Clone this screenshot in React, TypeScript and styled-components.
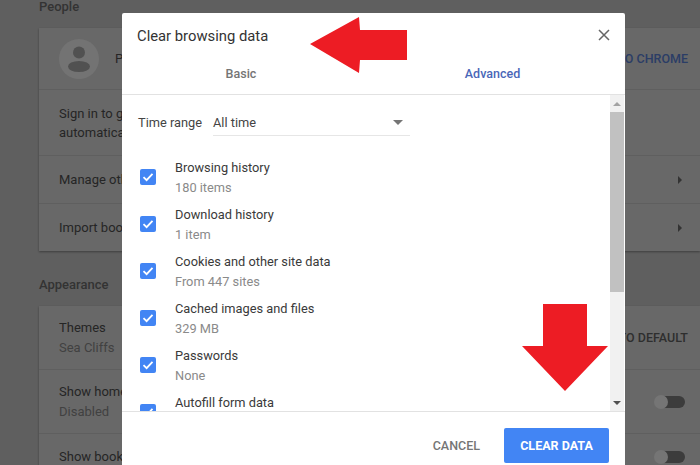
import styled, { createGlobalStyle } from 'styled-components'

const Global = createGlobalStyle`
  html, body {
    margin: 0;
    padding: 0;
    background: #5f5f5f;
    font-family: Roboto, "Liberation Sans", sans-serif;
    overflow: hidden;
  }
`

const Page = styled.div`
  position: relative;
  width: 700px;
  height: 465px;
  overflow: hidden;
  background: #5f5f5f;
`

const Settings = styled.div`
  padding-left: 39px;
  width: 661px;
  margin-top: -2px;
`

const SectionTitle = styled.div`
  font-size: 13px;
  font-weight: 500;
  line-height: 18px;
  color: #333;
  height: 18px;
  margin-bottom: 12px;
`

const Card = styled.div`
  background: #686868;
  box-shadow: 0 1px 2px rgba(0, 0, 0, 0.35);
  margin-bottom: 25px;
`

const SetRow = styled.div<{ $h: number }>`
  height: ${(p) => p.$h}px;
  box-sizing: border-box;
  padding: 0 18px 0 20px;
  display: flex;
  align-items: center;
  justify-content: space-between;
  border-top: 1px solid #5f5f5f;
  font-size: 13px;
  line-height: 19px;
  color: #252525;
  &:first-child {
    border-top: none;
  }
`

const SetLabel = styled.div`
  display: flex;
  align-items: center;
  gap: 16px;
`

const SetSub = styled.div`
  margin-top: 1px;
  color: #414141;
`

const Avatar = styled.div`
  width: 40px;
  height: 40px;
  border-radius: 50%;
  background: #737373;
  display: flex;
  align-items: center;
  justify-content: center;
`

const SetAction = styled.span<{ $blue?: boolean }>`
  font-size: 12.5px;
  font-weight: 500;
  margin-right: -6px;
  color: ${(p) => (p.$blue ? '#2b3d66' : '#2e2e2e')};
`

const Chevron = styled.div`
  width: 0;
  height: 0;
  border-top: 4px solid transparent;
  border-bottom: 4px solid transparent;
  border-left: 4px solid #333;
`

const Toggle = styled.div`
  position: relative;
  width: 29px;
  height: 12px;
  border-radius: 6px;
  background: #3c3c3c;
  margin-right: -3px;
  &::before {
    content: '';
    position: absolute;
    left: -2px;
    top: -1px;
    width: 14px;
    height: 14px;
    border-radius: 50%;
    background: #757575;
  }
`

const Dialog = styled.div`
  position: absolute;
  left: 122px;
  top: 13px;
  width: 503px;
  height: 470px;
  background: #fff;
  border-radius: 2px 2px 0 0;
  display: flex;
  flex-direction: column;
`

const DialogHead = styled.div`
  height: 82px;
  flex: none;
  box-sizing: border-box;
  border-bottom: 1px solid #e2e2e2;
  display: flex;
  flex-direction: column;
`

const TitleRow = styled.div`
  display: flex;
  justify-content: space-between;
  align-items: flex-start;
  padding: 14px 15px 0 15px;
  height: 46px;
  box-sizing: border-box;
`

const Title = styled.div`
  font-size: 14.8px;
  line-height: 18px;
  color: #333;
`

const Tabs = styled.div`
  display: grid;
  grid-template-columns: 238px 265px;
  height: 30px;
`

const Tab = styled.div<{ $active?: boolean }>`
  font-size: 12.5px;
  font-weight: 500;
  line-height: 30px;
  text-align: center;
  color: ${(p) => (p.$active ? '#4a67b8' : '#757575')};
`

const DialogBody = styled.div`
  height: 317px;
  box-sizing: border-box;
  flex: none;
  display: flex;
  overflow: hidden;
  border-bottom: 1px solid #e2e2e2;
`

const Content = styled.div`
  flex: 1;
  padding: 15px 0 0 16px;
  overflow: hidden;
`

const RangeRow = styled.div`
  display: flex;
  align-items: flex-start;
  gap: 11px;
  height: 43px;
`

const RangeLabel = styled.div`
  font-size: 12.8px;
  line-height: 26px;
  color: #444;
`

const Select = styled.div`
  width: 197px;
  height: 26px;
  box-sizing: border-box;
  border-bottom: 1px solid #e6e6e6;
  display: flex;
  align-items: center;
  justify-content: space-between;
  padding-right: 7px;
  font-size: 12.8px;
  color: #444;
`

const Caret = styled.div`
  width: 0;
  height: 0;
  border-left: 5px solid transparent;
  border-right: 5px solid transparent;
  border-top: 5px solid #757575;
`

const CheckRow = styled.div`
  display: flex;
  align-items: center;
  height: 47px;
  flex: none;
`

const Box = styled.div`
  width: 16px;
  height: 16px;
  border-radius: 2px;
  background: #4285f4;
  margin: 0 19px 0 2px;
  flex: none;
  display: flex;
  align-items: center;
  justify-content: center;
`

const CheckLabel = styled.div`
  font-size: 12.8px;
  line-height: 19px;
  padding-top: 2px;
  color: #3a3a3a;
`

const CheckSub = styled.div`
  min-height: 19px;
  margin-top: 1px;
  color: #8a8a8a;
`

const Scrollbar = styled.div`
  width: 14px;
  flex: none;
  margin-right: 1px;
  background: #f1f1f1;
  display: flex;
  flex-direction: column;
  align-items: center;
`

const ScrollArrow = styled.div<{ $down?: boolean }>`
  height: 17px;
  flex: none;
  width: 100%;
  display: flex;
  align-items: center;
  justify-content: center;
  &::before {
    content: '';
    width: 0;
    height: 0;
    border-left: 4px solid transparent;
    border-right: 4px solid transparent;
    ${(p) => (p.$down ? 'border-top: 4px solid #505050;' : 'border-bottom: 4px solid #a3a3a3;')}
  }
`

const Thumb = styled.div`
  width: 100%;
  height: 180px;
  background: #c1c1c1;
  flex: none;
`

const Spacer = styled.div`
  flex: 1;
`

const Footer = styled.div`
  flex: 1;
  display: flex;
  justify-content: flex-end;
  align-items: flex-start;
  padding: 16px 16px 0 0;
  gap: 24px;
`

const Cancel = styled.div`
  font-size: 12.5px;
  font-weight: 500;
  line-height: 35px;
  color: #757575;
`

const Primary = styled.div`
  width: 105px;
  height: 35px;
  border-radius: 2px;
  background: #4285f4;
  color: #fff;
  font-size: 12.5px;
  font-weight: 700;
  line-height: 35px;
  text-align: center;
`

const CloseIcon = styled.svg`
  width: 12px;
  height: 12px;
  margin: 2px 0 0 0;
  flex: none;
`

const ArrowMark = styled.svg<{ $x: number; $y: number }>`
  position: absolute;
  left: ${(p) => p.$x}px;
  top: ${(p) => p.$y}px;
`

const items = [
  ['Browsing history', '180 items'],
  ['Download history', '1 item'],
  ['Cookies and other site data', 'From 447 sites'],
  ['Cached images and files', '329 MB'],
  ['Passwords', 'None'],
  ['Autofill form data', ''],
]

export default function App() {
  return (
    <Page>
      <Global />
      <Settings>
        <SectionTitle>People</SectionTitle>
        <Card>
          <SetRow $h={61}>
            <SetLabel>
              <Avatar>
                <svg width="24" height="26" viewBox="0 0 24 26">
                  <circle cx="12" cy="6.5" r="6" fill="#515151" />
                  <ellipse cx="12" cy="20.5" rx="11" ry="5.5" fill="#515151" />
                </svg>
              </Avatar>
              <span>Person 1</span>
            </SetLabel>
            <SetAction $blue>SIGN IN TO CHROME</SetAction>
          </SetRow>
          <SetRow $h={66}>
            <div>
              Sign in to get your bookmarks, history, passwords and other settings
              <br />
              automatically
            </div>
          </SetRow>
          <SetRow $h={48}>
            <span>Manage other people</span>
            <Chevron />
          </SetRow>
          <SetRow $h={48}>
            <span>Import bookmarks and settings</span>
            <Chevron />
          </SetRow>
        </Card>
        <SectionTitle>Appearance</SectionTitle>
        <Card>
          <SetRow $h={63}>
            <div>
              Themes
              <SetSub>Sea Cliffs</SetSub>
            </div>
            <SetAction>RESET TO DEFAULT</SetAction>
          </SetRow>
          <SetRow $h={64}>
            <div>
              Show home button
              <SetSub>Disabled</SetSub>
            </div>
            <Toggle />
          </SetRow>
          <SetRow $h={46}>
            <span>Show bookmarks bar</span>
            <Toggle />
          </SetRow>
        </Card>
      </Settings>

      <Dialog>
        <DialogHead>
          <TitleRow>
            <Title>Clear browsing data</Title>
            <CloseIcon viewBox="0 0 12 12">
              <path d="M1 1 L11 11 M11 1 L1 11" stroke="#666" strokeWidth="1.5" fill="none" />
            </CloseIcon>
          </TitleRow>
          <Tabs>
            <Tab>Basic</Tab>
            <Tab $active>Advanced</Tab>
          </Tabs>
        </DialogHead>
        <DialogBody>
          <Content>
            <RangeRow>
              <RangeLabel>Time range</RangeLabel>
              <Select>
                <span>All time</span>
                <Caret />
              </Select>
            </RangeRow>
            {items.map(([label, sub]) => (
              <CheckRow key={label}>
                <Box>
                  <svg width="12" height="12" viewBox="0 0 12 12">
                    <path d="M1.5 6.2 L4.6 9.2 L10.5 2.8" stroke="#fff" strokeWidth="1.8" fill="none" />
                  </svg>
                </Box>
                <CheckLabel>
                  {label}
                  <CheckSub>{sub}</CheckSub>
                </CheckLabel>
              </CheckRow>
            ))}
          </Content>
          <Scrollbar>
            <ScrollArrow />
            <Thumb />
            <Spacer />
            <ScrollArrow $down />
          </Scrollbar>
        </DialogBody>
        <Footer>
          <Cancel>CANCEL</Cancel>
          <Primary>CLEAR DATA</Primary>
        </Footer>
      </Dialog>

      <ArrowMark $x={309} $y={16} width="99" height="58" viewBox="0 0 99 58">
        <path d="M1 28 L50 1 L51 14 L98 14 L98 44 L51 44 L50 57 Z" fill="#ed1c24" />
      </ArrowMark>
      <ArrowMark $x={521} $y={303} width="88" height="90" viewBox="0 0 88 90">
        <path d="M22 1 L66 1 L66 43 L87 43 L44 88 L1 43 L22 43 Z" fill="#ed1c24" />
      </ArrowMark>
    </Page>
  )
}
